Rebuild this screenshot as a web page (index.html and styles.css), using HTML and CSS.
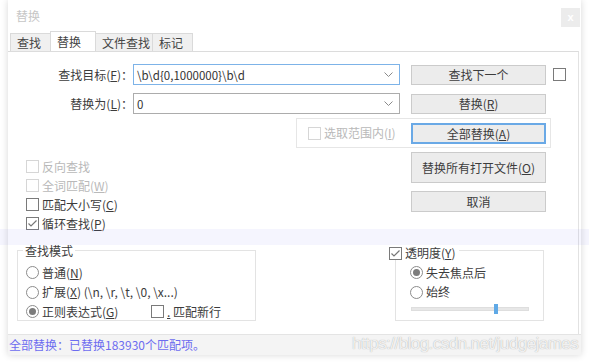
FILE: index.html
```html
<!DOCTYPE html>
<html lang="zh-CN">
<head>
  <meta charset="UTF-8" />
  <title>替换</title>
  <link rel="stylesheet" href="styles.css">
</head>
<body>
  <div class="dialog">
    <div class="titlebar">
      <span class="title">替换</span>
      <span class="close">x</span>
    </div>

    <div class="tabs">
      <span class="tab w41">查找</span>
      <span class="tab active w45">替换</span>
      <span class="tab w57">文件查找</span>
      <span class="tab w40">标记</span>
    </div>

    <div class="pane">
      <div class="row first">
        <span class="field-label">查找目标(<u>F</u>)：</span>
        <div class="combo focus">
          <span class="value">\b\d{0,1000000}\b\d</span>
          <svg class="chev" width="9" height="5" viewBox="0 0 9 5"><polyline points="0.5,0.5 4.5,4.5 8.5,0.5" fill="none" stroke="#8a8a8a" stroke-width="1"/></svg>
        </div>
        <button class="btn">查找下一个</button>
        <span class="box side"></span>
      </div>

      <div class="row second">
        <span class="field-label">替换为(<u>L</u>)：</span>
        <div class="combo">
          <span class="value">0</span>
          <svg class="chev" width="9" height="5" viewBox="0 0 9 5"><polyline points="0.5,0.5 4.5,4.5 8.5,0.5" fill="none" stroke="#8a8a8a" stroke-width="1"/></svg>
        </div>
        <button class="btn">替换(<u>R</u>)</button>
      </div>

      <div class="sel-group">
        <span class="check disabled"><span class="box"></span><span>选取范围内(<u>I</u>)</span></span>
        <button class="btn primary">全部替换(<u>A</u>)</button>
      </div>

      <div class="middle">
        <div class="checks">
          <div class="check disabled"><span class="box"></span><span>反向查找</span></div>
          <div class="check disabled"><span class="box"></span><span>全词匹配(<u>W</u>)</span></div>
          <div class="check"><span class="box"></span><span>匹配大小写(<u>C</u>)</span></div>
          <div class="check">
            <span class="box"><svg width="11" height="11" viewBox="0 0 11 11"><polyline points="1.5,5.5 4,8 9.5,2.5" fill="none" stroke="#777" stroke-width="1.2"/></svg></span><span>循环查找(<u>P</u>)</span>
          </div>
        </div>
        <div class="buttons">
          <button class="btn tall">替换所有打开文件(<u>O</u>)</button>
          <button class="btn">取消</button>
        </div>
      </div>

      <div class="bottom">
        <div class="group mode">
          <span class="legend">查找模式</span>
          <div class="opt"><span class="radio"></span><span>普通(<u>N</u>)</span></div>
          <div class="opt"><span class="radio"></span><span>扩展(<u>X</u>) (\n, \r, \t, \0, \x...)</span></div>
          <div class="opt">
            <span class="regex"><span class="radio on"></span><span>正则表达式(<u>G</u>)</span></span>
            <span class="box"></span><span><u>.</u>&nbsp;匹配新行</span>
          </div>
        </div>

        <div class="group alpha">
          <span class="legend">
            <span class="box"><svg width="11" height="11" viewBox="0 0 11 11"><polyline points="1.5,5.5 4,8 9.5,2.5" fill="none" stroke="#777" stroke-width="1.2"/></svg></span><span>透明度(<u>Y</u>)</span>
          </span>
          <div class="opt"><span class="radio on"></span><span>失去焦点后</span></div>
          <div class="opt"><span class="radio"></span><span>始终</span></div>
          <div class="slider">
            <span class="thumb" style="left:82px"></span>
          </div>
        </div>
      </div>
    </div>

    <div class="status">全部替换：已替换183930个匹配项。</div>
  </div>

  <div class="band"></div>
  <div class="watermark">https://blog.csdn.net/judgejames</div>
</body>
</html>
```

FILE: styles.css
```css
* { box-sizing: border-box; margin: 0; padding: 0; }
body {
  background: #fff; color: #3c3c3c; width: 589px; height: 364px; overflow: hidden;
  font: 12px/14px "Noto Sans CJK SC", "Noto Sans", sans-serif;
}
u { text-decoration: underline; text-underline-offset: 1px; }

/* window */
.dialog {
  margin-left: 8px; width: 573px; height: 355px; background: #fff;
  display: flex; flex-direction: column;
  box-shadow: 0 0 7px rgba(0,0,0,0.16);
}
.titlebar { height: 31px; display: flex; justify-content: space-between; padding: 8px 1px 0 8px; }
.title { color: #c6c6c6; line-height: 16px; }
.close {
  width: 19px; height: 19px; background: #ececec; color: #fff;
  font: bold 11px/18px "Liberation Sans", sans-serif; text-align: center;
}

/* tabs */
.tabs { height: 20px; display: flex; align-items: flex-end; padding-left: 2px; }
.tab {
  height: 18px; line-height: 17px; padding-left: 6px; background: #f0f0f0;
  border: 1px solid #dadada; border-bottom: none; margin-left: -1px; color: #444;
}
.tab:first-child { margin-left: 0; }
.tab.active { height: 20px; line-height: 19px; background: #fff; position: relative; }
.w41 { width: 41px; } .w45 { width: 46px; } .w57 { width: 58px; } .w40 { width: 41px; }

.pane {
  flex: 1; border-top: 1px solid #dcdcdc; border-right: 1px solid #e2e2e2;
  margin-right: 2px; display: flex; flex-direction: column;
}

/* top rows */
.row { display: flex; align-items: center; height: 21px; }
.row.first { margin-top: 12px; }
.row.second { margin-top: 8px; }
.field-label { width: 125px; text-align: right; }
.combo {
  width: 267px; height: 21px; border: 1px solid #acacac; background: #fff;
  display: flex; align-items: center; justify-content: space-between; padding: 0 6px 0 3px;
}
.combo.focus { border-color: #7db3e8; }
.value { font-size: 11.5px; color: #333; }
.btn {
  width: 135px; height: 20px; background: #ececec;
  border: 1px solid #cbcbcb; font: inherit; color: #3c3c3c; line-height: 17px;
}
.row .btn { margin-left: 11px; }
.btn.primary { border: 2px solid #6aa9e6; height: 21px; }
.box {
  display: inline-flex; align-items: center; justify-content: center;
  width: 13px; height: 13px; border: 1px solid #7a7a7a; background: #fff; flex: none;
}
.box.side { margin-left: 7px; }

.sel-group {
  margin: 4px 0 0 288px; width: 255px; height: 30px; border: 1px solid #e6e6e6;
  display: flex; align-items: center; justify-content: space-between; padding: 0 4px 0 11px;
}
.check { display: flex; align-items: center; gap: 3px; height: 19px; }
.check.disabled { color: #b9b9b9; }
.check.disabled .box { border-color: #d6d6d6; }

.middle { display: grid; grid-template-columns: 403px 135px; margin-top: 4px; height: 81px; }
.checks { padding: 5px 0 0 18px; }
.buttons { display: flex; flex-direction: column; gap: 8px; }
.buttons .btn { height: 21px; }
.buttons .btn.tall { height: 31px; }

/* bottom groups */
.bottom { display: flex; margin-top: 17px; }
.group { position: relative; border: 1px solid #e3e3e3; height: 71px; padding-top: 12px; }
.group.mode { margin-left: 9px; width: 239px; padding-left: 8px; }
.group.alpha { margin-left: 139px; width: 149px; padding-left: 14px; }
.legend {
  position: absolute; top: -7px; left: 5px; background: #fff; padding: 0 2px;
  display: flex; align-items: center; gap: 3px;
}
.alpha .legend { left: -7px; top: -5px; padding: 0 3px 0 0; }
.opt { display: flex; align-items: center; gap: 3px; height: 19.5px; }
.regex { display: flex; align-items: center; gap: 3px; width: 122px; }
.radio {
  width: 13px; height: 13px; border: 1px solid #8c8c8c; border-radius: 50%;
  display: inline-flex; align-items: center; justify-content: center; flex: none;
}
.radio.on::after { content: ""; width: 7px; height: 7px; border-radius: 50%; background: #7c7c7c; }
.slider {
  position: relative; width: 118px; height: 4px; margin: 5px 0 0 1px;
  background: #e7e7e7; border: 1px solid #dedede;
}
.thumb { position: absolute; top: -4px; width: 4px; height: 10px; background: #5fa9e6; }

.status {
  height: 21px; background: #f4f4f4; border-top: 1px solid #e4e4e4;
  color: #6d6cf0; line-height: 19px; padding-left: 1px;
}

/* overlays from the captured page */
.band {
  position: absolute; left: 0; right: 0; top: 229px; height: 16px;
  background: rgba(110,110,235,0.07);
}
.watermark {
  position: absolute; left: 352px; top: 333px;
  font: 17px/22px "Liberation Sans", sans-serif; letter-spacing: -0.55px;
  color: rgba(250,250,250,0.9); text-shadow: 0 0 1px rgba(0,0,0,0.35);
}
```
